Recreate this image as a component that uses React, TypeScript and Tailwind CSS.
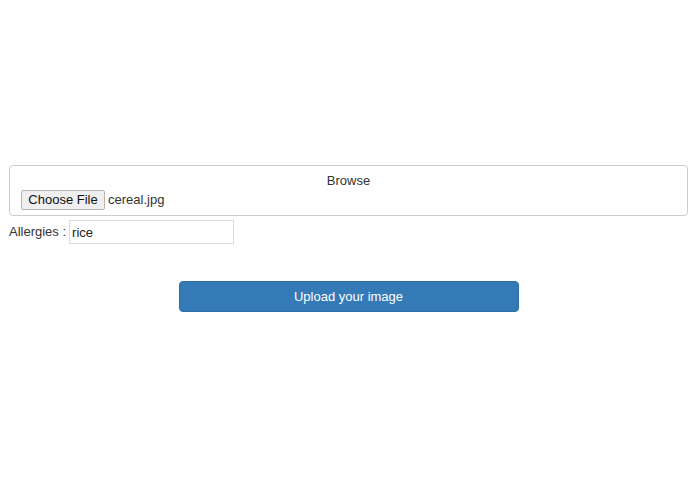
import { useState } from 'react';

export default function App() {
  const [allergies, setAllergies] = useState('rice');

  return (
    <div
      className="min-h-[494px] w-full bg-white text-[13px] text-[#333333]"
      style={{ fontFamily: '"Liberation Sans", Arial, sans-serif' }}
    >
      <div className="pt-[165px] pl-[9px] pr-[7px]">
        {/* File picker box */}
        <div className="h-[51px] rounded-[4px] border border-[#cccccc] px-[11px] pt-[5px]">
          <div className="text-center leading-[19px]">Browse</div>
          <div className="flex items-center">
            <button className="h-[20px] w-[84px] rounded-[2px] border border-[#b5b5b5] bg-[#efefef] text-[13px] leading-[18px] text-[#111]">
              Choose File
            </button>
            <span className="ml-[3px] leading-[20px]">cereal.jpg</span>
          </div>
        </div>

        {/* Allergies */}
        <div className="flex items-center mt-[4px]">
          <label className="leading-[20px]">Allergies :</label>
          <input
            type="text"
            value={allergies}
            onChange={(e) => setAllergies(e.target.value)}
            className="ml-[3px] h-[24px] w-[165px] border border-[#dcdcdc] px-[2px] text-[13px] text-[#222] outline-none"
          />
        </div>

        {/* Upload button */}
        <div className="flex justify-center mt-[37px]">
          <button className="h-[31px] w-[340px] rounded-[4px] border border-[#2e6da4] bg-[#337ab7] text-[13px] text-white">
            Upload your image
          </button>
        </div>
      </div>
    </div>
  );
}
